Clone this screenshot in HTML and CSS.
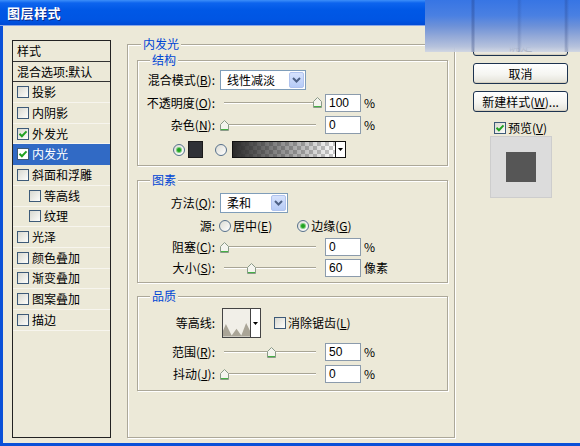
FILE: index.html
```html
<!DOCTYPE html>
<html lang="zh-CN">
<head>
<meta charset="utf-8">
<title>图层样式</title>
<link rel="stylesheet" href="styles.css">
</head>
<body>
<div class="window">
  <div class="titlebar"><span class="title">图层样式</span></div>
  <div class="client">
    <div class="stylelist">
      <div class="li head">样式</div>
      <div class="li head">混合选项:默认</div>
      <div class="li"><span class="cb"></span>投影</div>
      <div class="li"><span class="cb"></span>内阴影</div>
      <div class="li"><span class="cb"><svg viewBox="0 0 10 10"><path d="M1.5 4.8 L3.9 7.2 L8.5 2.4"/></svg></span>外发光</div>
      <div class="li sel"><span class="cb"><svg viewBox="0 0 10 10"><path d="M1.5 4.8 L3.9 7.2 L8.5 2.4"/></svg></span>内发光</div>
      <div class="li"><span class="cb"></span>斜面和浮雕</div>
      <div class="li sub"><span class="cb"></span>等高线</div>
      <div class="li sub"><span class="cb"></span>纹理</div>
      <div class="li"><span class="cb"></span>光泽</div>
      <div class="li"><span class="cb"></span>颜色叠加</div>
      <div class="li"><span class="cb"></span>渐变叠加</div>
      <div class="li"><span class="cb"></span>图案叠加</div>
      <div class="li"><span class="cb"></span>描边</div>
    </div>

    <div class="frame outer">
      <div class="legend">内发光</div>

      <div class="frame group g1">
        <div class="legend">结构</div>
        <div class="row h22 first">
          <span class="lbl">混合模式(<u>B</u>):</span>
          <div class="select s-blend"><span class="val">线性减淡</span><span class="ddbtn"><svg viewBox="0 0 9 6"><path d="M1 1 L4.5 4.5 L8 1"/></svg></span></div>
        </div>
        <div class="row h23">
          <span class="lbl">不透明度(<u>O</u>):</span>
          <div class="slider"><div class="track"></div><svg class="thumb" style="left:93px" viewBox="0 0 9 11"><path class="tb" d="M0.5 4.5 L4.5 0.5 L8.5 4.5 L8.5 10.5 L0.5 10.5 Z"/><path class="tg" d="M1 9.5 H8"/></svg></div>
          <span class="field">100</span><span class="unit">%</span>
        </div>
        <div class="row h22">
          <span class="lbl">杂色(<u>N</u>):</span>
          <div class="slider"><div class="track"></div><svg class="thumb" style="left:0px" viewBox="0 0 9 11"><path class="tb" d="M0.5 4.5 L4.5 0.5 L8.5 4.5 L8.5 10.5 L0.5 10.5 Z"/><path class="tg" d="M1 9.5 H8"/></svg></div>
          <span class="field">0</span><span class="unit">%</span>
        </div>
        <div class="row h27 colors">
          <span class="rb on"></span>
          <span class="swatch"></span>
          <span class="rb"></span>
          <div class="grad"><span class="gfill"></span><span class="garrow"><svg viewBox="0 0 5 3"><path d="M0 0 H5 L2.5 3 Z"/></svg></span></div>
        </div>
      </div>

      <div class="frame group g2">
        <div class="legend">图素</div>
        <div class="row h22 first5">
          <span class="lbl">方法(<u>Q</u>):</span>
          <div class="select s-method"><span class="val">柔和</span><span class="ddbtn"><svg viewBox="0 0 9 6"><path d="M1 1 L4.5 4.5 L8 1"/></svg></span></div>
        </div>
        <div class="row h23">
          <span class="lbl">源:</span>
          <span class="rb src1"></span><span class="opt">居中(<u>E</u>)</span>
          <span class="rb on src2"></span><span class="opt">边缘(<u>G</u>)</span>
        </div>
        <div class="row h20">
          <span class="lbl">阻塞(<u>C</u>):</span>
          <div class="slider"><div class="track"></div><svg class="thumb" style="left:0px" viewBox="0 0 9 11"><path class="tb" d="M0.5 4.5 L4.5 0.5 L8.5 4.5 L8.5 10.5 L0.5 10.5 Z"/><path class="tg" d="M1 9.5 H8"/></svg></div>
          <span class="field">0</span><span class="unit">%</span>
        </div>
        <div class="row h22">
          <span class="lbl">大小(<u>S</u>):</span>
          <div class="slider"><div class="track"></div><svg class="thumb" style="left:27px" viewBox="0 0 9 11"><path class="tb" d="M0.5 4.5 L4.5 0.5 L8.5 4.5 L8.5 10.5 L0.5 10.5 Z"/><path class="tg" d="M1 9.5 H8"/></svg></div>
          <span class="field">60</span><span class="unit">像素</span>
        </div>
      </div>

      <div class="frame group g3">
        <div class="legend">品质</div>
        <div class="row h30 first5">
          <span class="lbl">等高线:</span>
          <div class="contour">
            <svg class="cpic" viewBox="0 0 28 28"><path d="M0 28 L0 22 L3 15 L9 27 L14 20 L19 27 L24 14 L28 22 L28 28 Z"/></svg>
            <span class="carrow"><svg viewBox="0 0 5 3"><path d="M0 0 H5 L2.5 3 Z"/></svg></span>
          </div>
          <span class="cb aa"></span><span class="opt">消除锯齿(<u>L</u>)</span>
        </div>
        <div class="row h22 gap3">
          <span class="lbl">范围(<u>R</u>):</span>
          <div class="slider"><div class="track"></div><svg class="thumb" style="left:47px" viewBox="0 0 9 11"><path class="tb" d="M0.5 4.5 L4.5 0.5 L8.5 4.5 L8.5 10.5 L0.5 10.5 Z"/><path class="tg" d="M1 9.5 H8"/></svg></div>
          <span class="field">50</span><span class="unit">%</span>
        </div>
        <div class="row h22">
          <span class="lbl">抖动(<u>J</u>):</span>
          <div class="slider"><div class="track"></div><svg class="thumb" style="left:0px" viewBox="0 0 9 11"><path class="tb" d="M0.5 4.5 L4.5 0.5 L8.5 4.5 L8.5 10.5 L0.5 10.5 Z"/><path class="tg" d="M1 9.5 H8"/></svg></div>
          <span class="field">0</span><span class="unit">%</span>
        </div>
      </div>
    </div>

    <div class="rightcol">
      <div class="btn">确定</div>
      <div class="btn">取消</div>
      <div class="btn">新建样式(<u>W</u>)...</div>
      <div class="pvrow"><span class="cb"><svg viewBox="0 0 10 10"><path d="M1.5 4.8 L3.9 7.2 L8.5 2.4"/></svg></span><span>预览(<u>V</u>)</span></div>
      <div class="preview"><span class="sq"></span></div>
    </div>
  </div>
  <div class="smudge"></div>
</div>
</body>
</html>
```

FILE: styles.css
```css
* { box-sizing: border-box; }
html, body { margin: 0; padding: 0; }
body {
  width: 580px; height: 446px; overflow: hidden;
  background: #ece9d8;
  font-family: "Noto Sans CJK SC", "Noto Sans", sans-serif;
  font-size: 12px; line-height: 14px; color: #000;
}
u { text-decoration: underline; text-underline-offset: 1px; }

.window {
  position: relative;
  width: 580px; height: 446px;
  display: flex; flex-direction: column;
  background: #0a50d8;
}
.titlebar {
  flex: none; height: 26px; padding-left: 7px;
  display: flex; align-items: center;
  background: linear-gradient(#3d8ff9 0, #0d64ee 3px, #0058e6 10px, #0055e3 20px, #004bd6 25px, #8aa6e6 25px, #8aa6e6 26px);
}
.title {
  color: #fff; font-size: 13px; font-weight: 700; letter-spacing: 0.5px;
  text-shadow: 1px 1px 0 #0c2a8a;
}
.client {
  flex: 1; margin: 0 0 3px 3px;
  background: #ece9d8;
  display: flex; align-items: flex-start;
}

/* style list */
.stylelist {
  flex: none; width: 99px; height: 398px;
  margin: 14px 0 0 9px;
  border: 1px solid #222;
  background: #ece9d8;
}
.li {
  height: 20.7px; padding-left: 4px;
  display: flex; align-items: center; white-space: nowrap;
  border-bottom: 1px solid #f7f5ee;
}
.li.head { border-bottom-color: #333; }
.li.sub { padding-left: 16px; }
.li.sel { background: #316ac5; color: #fff; border-bottom-color: #316ac5; }

.cb {
  flex: none; width: 12px; height: 12px; margin-right: 3px;
  border: 1px solid #3d5a78;
  background: linear-gradient(135deg, #d8d8d0, #fdfdfb);
  display: flex; align-items: center; justify-content: center;
}
.cb svg { width: 10px; height: 10px; fill: none; stroke: #21a121; stroke-width: 2; }
.li.sel .cb { background: #fff; }

/* frames */
.frame {
  border: 1px solid #aca899;
  box-shadow: inset 1px 1px 0 #fff, 1px 1px 0 #fff;
}
.outer {
  flex: none; width: 328px; height: 394px;
  margin: 18px 0 0 16px;
  padding: 0 6px 0 9px;
}
.legend {
  width: max-content; height: 14px; line-height: 14px;
  margin: -8px 0 0 4px; padding: 0 2px;
  background: #ece9d8; color: #0046d5;
}
.group > .legend { margin-left: 12px; }
.g1 { margin-top: 9px; padding-bottom: 2px; }
.g2 { margin-top: 14px; padding-bottom: 3px; }
.g3 { margin-top: 13px; padding-bottom: 5px; }

.row { display: flex; align-items: center; white-space: nowrap; }
.h20 { height: 20px; }
.h22 { height: 22px; }
.h23 { height: 23px; }
.h27 { height: 27px; }
.h30 { height: 30px; }
.first { margin-top: 2px; }
.first5 { margin-top: 5px; }
.gap3 { margin-top: 3px; }

.lbl { flex: none; width: 77px; text-align: right; margin-right: 5px; }

/* select */
.select {
  flex: none; height: 20px;
  display: flex; align-items: center;
  border: 1px solid #7f9db9; background: #fff;
  padding: 0 1px 0 6px;
}
.s-blend { width: 86px; }
.s-method { width: 68px; }
.select .val { flex: 1; }
.ddbtn {
  flex: none; width: 15px; height: 16px; border-radius: 2px;
  background: linear-gradient(#d6e2fd, #b6cbf6);
  border: 1px solid #b0c3ee;
  display: flex; align-items: center; justify-content: center;
}
.ddbtn svg { width: 9px; height: 6px; fill: none; stroke: #4d6185; stroke-width: 2; }

/* slider */
.slider {
  position: relative; flex: none;
  width: 100px; height: 13px; margin-right: 5px;
  display: flex; align-items: center;
}
.track {
  flex: 1; margin: 0 4px; height: 2px;
  border-top: 1px solid #a8a595; border-bottom: 1px solid #fff;
}
.thumb { position: absolute; top: 1px; width: 9px; height: 11px; }
.thumb .tb { fill: #f4f4ee; stroke: #8a9a88; stroke-width: 1; }
.thumb .tg { stroke: #45b045; stroke-width: 1; fill: none; }

.field {
  flex: none; width: 36px; height: 18px; margin-right: 3px;
  border: 1px solid #8b9bac; background: #fff;
  padding-left: 3px; line-height: 16px;
  font-family: "Liberation Sans", "Noto Sans", sans-serif; font-size: 12px;
}
.unit { flex: none; }

/* radio */
.rb {
  flex: none; width: 12px; height: 12px; border-radius: 50%;
  border: 1px solid #56708c;
  background: linear-gradient(135deg, #dcdcd4, #fff);
  display: flex; align-items: center; justify-content: center;
}
.rb.on::after {
  content: ""; width: 4px; height: 4px; border-radius: 50%;
  background: #21a121; box-shadow: 0 0 0 1px #7ccf7c;
}
.colors { padding-left: 35px; }
.swatch {
  flex: none; width: 15px; height: 17px; margin: 0 12px 0 3px;
  border: 1px solid #1a1a1a; background: #2f3136;
}
.grad {
  flex: none; display: flex; height: 17px; margin-left: 5px;
  border: 1px solid #111;
}
.gfill {
  width: 102px;
  background:
    linear-gradient(to right, #2a2a2a, rgba(42,42,42,0.45) 55%, rgba(42,42,42,0)),
    repeating-conic-gradient(#c8c8c8 0 25%, #fff 0 50%) 0 0 / 8px 8px;
}
.garrow {
  width: 10px; border-left: 1px solid #111; background: #fff;
  display: flex; align-items: center; justify-content: center;
}
.garrow svg, .carrow svg { width: 5px; height: 3px; fill: #000; }

.opt { flex: none; margin-left: 2px; }
.src1 { margin-left: -1px; }
.src2 { margin-left: 25px; }

/* contour */
.contour {
  flex: none; display: flex; height: 30px; margin-left: 2px;
  border: 1px solid #444;
}
.cpic { width: 27px; height: 28px; background: #f1efe8; display: block; }
.cpic path { fill: #aaa597; }
.carrow {
  width: 10px; border-left: 1px solid #444; background: #fff;
  display: flex; align-items: center; justify-content: center;
}
.cb.aa { margin-left: 13px; margin-right: 0; }

/* right column */
.rightcol {
  flex: none; width: 95px;
  margin: 9px 0 0 18px;
  display: flex; flex-direction: column;
}
.btn {
  height: 21px; margin-bottom: 7px;
  border: 1px solid #1d3350; border-radius: 3px;
  background: linear-gradient(#fff 0, #f5f5f1 55%, #e4e2d8 100%);
  box-shadow: inset 0 -1px 0 #d6d0c0;
  display: flex; align-items: center; justify-content: center;
  white-space: nowrap;
}
.pvrow {
  margin-top: 2px; height: 14px;
  display: flex; align-items: center; justify-content: center;
}
.pvrow .cb { margin-right: 2px; }
.preview {
  width: 62px; height: 62px; margin: 1px auto 0;
  background: #dcdcdc; border: 1px solid #cdcdcd;
  display: flex; align-items: center; justify-content: center;
}
.preview .sq { width: 30px; height: 30px; background: #565656; }

/* blurred screenshot smudge over title/OK button */
.smudge {
  position: absolute; left: 425px; top: 0;
  width: 155px; height: 52px;
  background:
    linear-gradient(to right, transparent 46px, rgba(30,50,110,.28) 47px, rgba(30,50,110,.28) 49px, transparent 50px,
      transparent 92px, rgba(30,50,110,.18) 94px, transparent 97px,
      transparent 139px, rgba(30,50,110,.28) 141px, transparent 144px),
    linear-gradient(#3775e4 0, #4a80e2 30%, #6d91d8 50%, #93a9d8 70%, #b6c2dc 90%, rgba(205,212,228,.85) 100%);
}
```
